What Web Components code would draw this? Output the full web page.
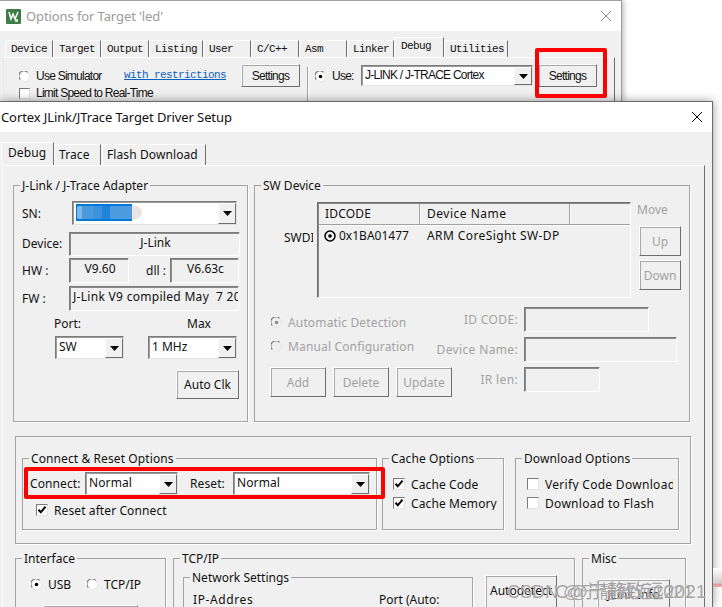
<!DOCTYPE html>
<html>
<head>
<meta charset="utf-8">
<title>Target Driver Setup</title>
<style>
  html, body { margin: 0; height: 607px; overflow: hidden; background: #fff; }
  body { position: relative; }
</style>
</head>
<body>
<options-window></options-window>
<driver-window></driver-window>
<red-mark style="left:535px;top:48px;width:72px;height:50px"></red-mark>
<red-mark style="left:24px;top:467px;width:361px;height:32px"></red-mark>
<water-mark></water-mark>

<script>
class Base extends HTMLElement {
  constructor() {
    super();
    this.shadowDOM = this.attachShadow({ mode: "open" });
  }
  connectedCallback() {
    this.render();
  }
}

const ARROW = `<svg width="9" height="5" viewBox="0 0 9 5"><path d="M0 0h9L4.500 5z" fill="#000"/></svg>`;

class WinButton extends Base {
  render() {
    const off = this.hasAttribute("disabled");
    this.shadowDOM.innerHTML = `
    <style>
      :host { display: block; box-sizing: border-box; flex: none; height: 30px; background: #f0f0f0;
        border: 1px solid; border-color: #fff #6e6e6e #6e6e6e #fff; box-shadow: 1px 1px 0 #a8a8a8 inset;
        display: flex; align-items: center; justify-content: center; white-space: nowrap;
        color: ${off ? "#a2a2a2" : "inherit"}; }
    </style><slot></slot>`;
  }
}

class WinCombo extends Base {
  render() {
    this.shadowDOM.innerHTML = `
    <style>
      :host { display: flex; box-sizing: border-box; flex: none; height: 23px; background: #fff;
        border: 1px solid; border-color: #7b7b7b #e3e3e3 #e3e3e3 #7b7b7b; box-shadow: 1px 1px 0 #9a9a9a inset; }
      .text { flex: 1; min-width: 0; padding-left: 3px; display: flex; align-items: center; white-space: nowrap; padding-bottom: 2px; }
      .drop { flex: none; width: 16px; margin: 1px 0 0 0; background: #f0f0f0; display: flex; align-items: center;
        justify-content: center; border: 1px solid; border-color: #fff #6e6e6e #6e6e6e #fff; }
    </style>
    <div class="text"><slot></slot></div>
    <div class="drop">${ARROW}</div>`;
  }
}

class WinField extends Base {
  render() {
    this.shadowDOM.innerHTML = `
    <style>
      :host { display: flex; box-sizing: border-box; flex: none; height: 25px; align-items: center; overflow: hidden;
        justify-content: ${this.getAttribute("align") || "center"}; white-space: nowrap; padding: 0 0 4px 2px;
        border: 1px solid; border-color: #7b7b7b #fff #fff #7b7b7b; box-shadow: 1px 1px 0 #8a8a8a inset; }
    </style><slot></slot>`;
  }
}

class WinRadio extends Base {
  render() {
    const on = this.hasAttribute("checked");
    const off = this.hasAttribute("disabled");
    this.shadowDOM.innerHTML = `
    <style>
      :host { display: flex; align-items: center; gap: 6px; white-space: nowrap; flex: none;
        color: ${off ? "#a2a2a2" : "inherit"}; }
      svg { flex: none; }
    </style>
    <svg width="11" height="11" viewBox="0 0 11 11">
      <circle cx="5.500" cy="5.500" r="5" fill="${off ? "#f0f0f0" : "#fff"}" stroke="#e4e4e4"/>
      <path d="M1.300 8.500A5 5 0 0 1 8.500 1.300" fill="none" stroke="#777" stroke-width="1.100"/>
      ${on ? `<circle cx="5.500" cy="5.500" r="1.800" fill="${off ? "#8c8c8c" : "#000"}"/>` : ""}
    </svg>
    <span><slot></slot></span>`;
  }
}

class WinCheck extends Base {
  render() {
    const on = this.hasAttribute("checked");
    this.shadowDOM.innerHTML = `
    <style>
      :host { display: flex; align-items: center; gap: 6px; white-space: nowrap; overflow: hidden; }
      .mark { flex: none; box-sizing: border-box; width: 12px; height: 12px; background: #fff; display: flex;
        border: 1px solid; border-color: #7b7b7b #e3e3e3 #e3e3e3 #7b7b7b; }
    </style>
    <div class="mark">${on ? `<svg width="10" height="10" viewBox="0 0 10 10"><path d="M1.500 4.800l2.300 2.500 4.700-5.600" fill="none" stroke="#000" stroke-width="2"/></svg>` : ""}</div>
    <span><slot></slot></span>`;
  }
}

class GroupBox extends Base {
  render() {
    this.shadowDOM.innerHTML = `
    <style>
      :host { display: block; box-sizing: border-box; flex: none; padding-top: 7px; }
      .box { box-sizing: border-box; height: 100%; border: 1px solid #a3a3a3; box-shadow: 1px 1px 0 #fff; }
      .legend { width: fit-content; margin: -8px 0 0 6px; padding: 0 2px; height: 15px; line-height: 15px;
        background: #f0f0f0; white-space: nowrap; }
    </style>
    <div class="box">
      <div class="legend">${this.getAttribute("label")}</div>
      <slot></slot>
    </div>`;
  }
}

class WinTab extends Base {
  render() {
    const sel = this.hasAttribute("selected");
    this.shadowDOM.innerHTML = `
    <style>
      :host { display: flex; box-sizing: border-box; flex: none; align-items: center; white-space: nowrap;
        padding: 0 0 ${sel ? "3px" : "1px"} ${sel ? "6px" : "4px"}; background: #f0f0f0;
        border: 1px solid; border-color: #fff #6e6e6e transparent #fff; border-bottom: 0; }
    </style><slot></slot>`;
  }
}

class TitleBar extends Base {
  render() {
    const muted = this.hasAttribute("muted");
    this.shadowDOM.innerHTML = `
    <style>
      :host { display: flex; align-items: center; height: 30px; background: #fff; flex: none; }
      .label { flex: 1; white-space: nowrap; color: ${muted ? "#9b9b9b" : "#111"}; }
      svg { flex: none; margin-right: 10px; }
    </style>
    <slot></slot>
    <div class="label">${this.getAttribute("label")}</div>
    <svg width="10" height="10" viewBox="0 0 10 10"><path d="M0 0l10 10M10 0L0 10" stroke="${muted ? "#8c8c8c" : "#000"}" fill="none"/></svg>`;
  }
}

class OptionsWindow extends Base {
  render() {
    const tabs = [["Device",48],["Target",48],["Output",48],["Listing",54],["User",48],["C/C++",48],["Asm",48],["Linker",47]];
    this.shadowDOM.innerHTML = `
    <style>
      :host { display: block; box-sizing: border-box; width: 622px; height: 101px; border-top: 1px solid #a0a0a0;
        border-right: 1px solid #9c9c9c; box-shadow: 2px 0 5px rgba(0,0,0,.25);
        font: 12px "Liberation Sans", sans-serif; letter-spacing: -.75px; color: #111; }
      .clip { height: 100%; overflow: hidden; background: #f0f0f0; }
      title-bar { font: 13px "Noto Sans", sans-serif; letter-spacing: -.1px; padding-left: 6px; }
      title-bar svg { margin-right: 6px; }
      .strip { display: flex; align-items: flex-end; height: 26px; padding-left: 5px; font: 11px "Liberation Mono", monospace; letter-spacing: -.6px; }
      .strip win-tab { height: 17px; padding-left: 5px; }
      .strip win-tab[selected] { height: 20px; padding-left: 6px; }
      .panel { margin-left: 3px; width: 612px; height: 60px; box-sizing: border-box; border: 1px solid; border-color: #fff #6e6e6e transparent #e8e8e8; }
      .row { display: flex; align-items: flex-start; padding: 6px 0 0 1px; height: 26px; box-sizing: border-box; }
      .sim { margin: 5px 0 0 14px; width: 105px; }
      a { color: #0a5ec2; text-decoration: underline; font: 11px "Liberation Mono", monospace; letter-spacing: -.6px; width: 117px; margin-top: 5px; }
      .settings { width: 59px; height: 23px; }
      .rule { width: 1px; height: 40px; background: #a0a0a0; margin: 3px 7px 0 7px; box-shadow: 1px 0 0 #fff; }
      .use { margin-top: 5px; width: 46px; }
      win-combo { width: 172px; height: 21px; margin-top: 1px; }
      .go { margin-left: 5px; }
      .limit { display: flex; align-items: center; margin: 0 0 0 15px; gap: 6px; height: 14px; padding-top: 2px; }
      .limit i { width: 9px; height: 9px; border: 1px solid; border-color: #777 #ddd #ddd #777; background: #fff; }
    </style>
    <div class="clip">
      <title-bar label="Options for Target 'led'" muted>
        <svg class="logo" width="15" height="15" viewBox="0 0 15 15" style="margin-right:5px">
          <rect width="15" height="15" rx="1" fill="#3e7b46"/>
          <path d="M3 3l2 7 2-5 2 5 3-7" fill="none" stroke="#fff" stroke-width="1.500"/>
          <rect x="9" y="10" width="3" height="3" fill="#cfe5d2"/>
        </svg>
      </title-bar>
      <div class="strip">
        ${tabs.map(([t, w]) => `<win-tab style="width:${w}px">${t}</win-tab>`).join("")}
        <win-tab selected style="width:50px">Debug</win-tab>
        <win-tab style="width:64px">Utilities</win-tab>
      </div>
      <div class="panel">
        <div class="row">
          <win-radio class="sim">Use Simulator</win-radio>
          <a>with restrictions</a>
          <win-button class="settings">Settings</win-button>
          <div class="rule"></div>
          <win-radio class="use" checked>Use:</win-radio>
          <win-combo>J-LINK / J-TRACE Cortex</win-combo>
          <win-button class="settings go">Settings</win-button>
        </div>
        <div class="limit"><i></i><span>Limit Speed to Real-Time</span></div>
      </div>
    </div>`;
  }
}

class AdapterGroup extends Base {
  render() {
    this.shadowDOM.innerHTML = `
    <style>
      :host { display: block; flex: none; }
      .row { display: flex; align-items: center; padding-left: 8px; }
      .lab { flex: none; white-space: nowrap; }
      .blue { width: 56px; height: 17px; background: #0078d7; display: flex; align-items: center; }
      .blur { flex: none; width: 65px; height: 13px; margin-left: 1px; border-radius: 2px 7px 7px 2px;
        background: linear-gradient(90deg, #7fb6e6 0 5px, #4a99dd 5px 16px, #3c92dc 16px 25px, #1f84da 25px 33px, #4c9be0 33px 55px, #e9e3e3 55px); }
      .sn { margin-top: 8px; height: 24px; }
      .dev { margin-top: 7px; height: 24px; }
      .hw { margin-top: 2px; height: 25px; }
      .fw { margin-top: 3px; height: 25px; }
      .heads { margin-top: 5px; height: 14px; }
      .pick { margin-top: 6px; height: 23px; }
      .auto { margin-top: 11px; height: 29px; }
      .dev .lab { margin-top: -2px; }
    </style>
    <group-box label="J-Link / J-Trace Adapter" style="width:235px;height:244px">
      <div class="row sn"><span class="lab" style="width:50px">SN:</span>
        <win-combo style="width:165px;height:24px"><div class="blue"><div class="blur"></div></div></win-combo></div>
      <div class="row dev"><span class="lab" style="width:47px">Device:</span><win-field style="width:171px;height:24px">J-Link</win-field></div>
      <div class="row hw"><span class="lab" style="width:47px">HW :</span><win-field style="width:60px">V9.60</win-field>
        <span class="lab" style="margin-left:17px;width:24px">dll :</span><win-field style="width:69px">V6.63c</win-field></div>
      <div class="row fw"><span class="lab" style="width:47px">FW :</span><win-field align="flex-start" style="width:170px;padding-left:3px;letter-spacing:.3px">J-Link V9 compiled May&nbsp;&nbsp;7 2021</win-field></div>
      <div class="row heads"><span class="lab" style="margin-left:32px;width:133px">Port:</span><span class="lab">Max</span></div>
      <div class="row pick"><win-combo style="margin-left:33px;width:69px">SW</win-combo><win-combo style="margin-left:24px;width:89px">1 MHz</win-combo></div>
      <div class="row auto"><win-button style="margin-left:154px;width:63px;height:29px">Auto Clk</win-button></div>
    </group-box>`;
  }
}

class DeviceList extends Base {
  render() {
    this.shadowDOM.innerHTML = `
    <style>
      :host { display: block; box-sizing: border-box; flex: none; width: 314px; height: 96px; overflow: hidden;
        border: 1px solid; border-color: #6e6e6e #fff #fff #6e6e6e; box-shadow: 1px 1px 0 #8a8a8a inset; padding: 1px 0 0 1px; }
      .head { display: flex; height: 20px; border-bottom: 1px solid #a0a0a0; box-shadow: 0 1px 0 #fff; }
      .head div { box-sizing: border-box; flex: none; padding-left: 6px; line-height: 19px; border-right: 1px solid #a0a0a0; box-shadow: 1px 0 0 #fff; }
      .item { display: flex; align-items: center; height: 21px; white-space: nowrap; }
      svg { flex: none; margin: 0 3px 0 5px; }
    </style>
    <div class="head"><div style="width:101px;letter-spacing:.2px">IDCODE</div><div style="width:150px;padding-left:7px;letter-spacing:.5px">Device Name</div></div>
    <div class="item">
      <svg width="12" height="12" viewBox="0 0 12 12"><circle cx="6" cy="6" r="5" fill="none" stroke="#000" stroke-width="1.500"/><circle cx="6" cy="6" r="1.800"/></svg>
      <span style="width:88px">0x1BA01477</span><span style="letter-spacing:.4px">ARM CoreSight SW-DP</span>
    </div>`;
  }
}

class SwDeviceGroup extends Base {
  render() {
    this.shadowDOM.innerHTML = `
    <style>
      :host { display: block; flex: none; }
      .upper { display: flex; margin-top: 9px; padding-left: 29px; }
      .swdi { flex: none; width: 29px; overflow: hidden; margin: 27px 4px 0 0; }
      .side { flex: none; margin-left: 6px; color: #a2a2a2; }
      .side div { height: 16px; line-height: 16px; margin-bottom: 8px; }
      .side win-button { width: 42px; margin: 0 0 4px 2px; }
      .lower { display: flex; margin-top: 9px; padding-left: 16px; letter-spacing: .15px; }
      .left { flex: none; width: 159px; padding-top: 3px; }
      .left win-radio { height: 24px; }
      .btns { display: flex; gap: 7px; margin: 9px 0 0 -1px; letter-spacing: 0; }
      .btns win-button { width: 56px; }
      .labs { flex: none; width: 88px; color: #a2a2a2; text-align: right; letter-spacing: .35px; }
      .labs div { height: 25px; line-height: 26px; margin-bottom: 5px; white-space: nowrap; }
      .fields { flex: none; margin-left: 6px; }
      .fields win-field { margin-bottom: 5px; }
    </style>
    <group-box label="SW Device" style="width:436px;height:244px">
      <div class="upper">
        <div class="swdi">SWDIO</div>
        <device-list></device-list>
        <div class="side">
          <div>Move</div>
          <win-button disabled>Up</win-button>
          <win-button disabled>Down</win-button>
        </div>
      </div>
      <div class="lower">
        <div class="left">
          <win-radio disabled checked>Automatic Detection</win-radio>
          <win-radio disabled>Manual Configuration</win-radio>
          <div class="btns"><win-button disabled>Add</win-button><win-button disabled>Delete</win-button><win-button disabled>Update</win-button></div>
        </div>
        <div class="labs"><div>ID CODE:</div><div>Device Name:</div><div>IR len:</div></div>
        <div class="fields">
          <win-field style="width:125px"></win-field>
          <win-field style="width:153px"></win-field>
          <win-field style="width:76px"></win-field>
        </div>
      </div>
    </group-box>`;
  }
}

class ResetOptions extends Base {
  render() {
    this.shadowDOM.innerHTML = `
    <style>
      :host { display: flex; padding: 14px 0 0 6px; box-sizing: border-box; width: 676px; height: 108px; margin: 14px 0 0 12px;
        border: 1px solid #a3a3a3; box-shadow: 1px 1px 0 #fff; flex: none; letter-spacing: .1px; }
      .conn { display: flex; align-items: center; margin-top: 6px; padding-left: 7px; height: 23px; white-space: nowrap; }
      .conn span { flex: none; }
      .after { margin: 8px 0 0 13px; height: 14px; }
      .list { margin-top: 11px; padding-left: 10px; display: flex; flex-direction: column; gap: 5px; }
      .list win-check { height: 14px; }
    </style>
    <group-box label="Connect &amp; Reset Options" style="width:355px;height:79px">
      <div class="conn">
        <span style="width:55px">Connect:</span><win-combo style="width:93px">Normal</win-combo>
        <span style="margin-left:12px;width:43px">Reset:</span><win-combo style="width:137px">Normal</win-combo>
      </div>
      <win-check class="after" checked>Reset after Connect</win-check>
    </group-box>
    <group-box label="Cache Options" style="width:122px;height:79px;margin-left:5px">
      <div class="list"><win-check checked>Cache Code</win-check><win-check checked>Cache Memory</win-check></div>
    </group-box>
    <group-box label="Download Options" style="width:164px;height:79px;margin-left:11px">
      <div class="list" style="padding-left:11px;width:146px;letter-spacing:.3px"><win-check>Verify Code Download</win-check><win-check>Download to Flash</win-check></div>
    </group-box>`;
  }
}

class LinkOptions extends Base {
  render() {
    this.shadowDOM.innerHTML = `
    <style>
      :host { display: flex; margin: 7px 0 0 12px; flex: none; height: 100px; overflow: hidden; }
      .radios { display: flex; margin-top: 11px; padding-left: 15px; height: 14px; }
      .radios win-radio { height: 14px; }
      .inner { display: flex; }
      .net { display: flex; margin-top: 8px; padding-left: 9px; white-space: nowrap; line-height: 14px; }
      .ip { flex: none; width: 61px; overflow: hidden; letter-spacing: .6px; }
      win-button.tall { height: 40px; padding-bottom: 10px; }
    </style>
    <group-box label="Interface" style="width:151px;height:100px">
      <div class="radios"><win-radio checked style="width:56px">USB</win-radio><win-radio>TCP/IP</win-radio></div>
      <win-button style="width:95px;height:30px;margin:14px 0 0 27px"></win-button>
    </group-box>
    <group-box label="TCP/IP" style="width:402px;height:100px;margin-left:7px">
      <div class="inner">
        <group-box label="Network Settings" style="width:290px;height:60px;margin:4px 0 0 9px">
          <div class="net"><div class="ip">IP-Address</div><span style="margin-left:125px">Port (Auto:</span></div>
        </group-box>
        <win-button class="tall" style="width:72px;margin:9px 0 0 12px">Autodetect</win-button>
      </div>
    </group-box>
    <group-box label="Misc" style="width:104px;height:100px;margin-left:7px">
      <win-button class="tall" style="width:73px;margin:13px 0 0 14px">JLink Info</win-button>
    </group-box>`;
  }
}

class DriverWindow extends Base {
  render() {
    this.shadowDOM.innerHTML = `
    <style>
      :host { display: flex; flex-direction: column; box-sizing: border-box; width: 713px; height: 506px; overflow: visible;
        position: relative; border-top: 1px solid #6a6a6a; border-right: 1px solid #6a6a6a; background: #f0f0f0;
        box-shadow: 0 0 9px rgba(0,0,0,.4); font: 12px "Noto Sans", sans-serif; color: #111; }
      title-bar { padding-left: 1px; font-size: 13px; letter-spacing: -.1px; }
      .strip { display: flex; align-items: flex-end; height: 23px; margin-top: 10px; padding-left: 1px; flex: none; letter-spacing: .1px; }
      .panel { flex: 1; min-height: 0; width: 703px; margin-left: 2px; box-sizing: border-box; overflow: hidden;
        border: 1px solid; border-color: #fff #6e6e6e transparent #fff; border-bottom: 0; display: flex; flex-direction: column; }
      .top { display: flex; gap: 6px; padding: 12px 0 0 10px; flex: none; }
    </style>
    <title-bar label="Cortex JLink/JTrace Target Driver Setup"></title-bar>
    <div class="strip">
      <win-tab selected style="width:53px;height:23px">Debug</win-tab>
      <win-tab style="width:47px;height:21px">Trace</win-tab>
      <win-tab style="width:104px;height:21px;margin-left:1px">Flash Download</win-tab>
    </div>
    <div class="panel">
      <div class="top"><adapter-group></adapter-group><sw-device-group></sw-device-group></div>
      <reset-options></reset-options>
      <link-options></link-options>
    </div>`;
  }
}

class RedMark extends Base {
  render() {
    this.shadowDOM.innerHTML = `
    <style>
      :host { display: block; position: absolute; box-sizing: border-box; border: 4px solid #f00; border-radius: 2px; }
    </style>`;
  }
}

class WaterMark extends Base {
  render() {
    this.shadowDOM.innerHTML = `
    <style>
      :host { display: block; position: absolute; left: 0; top: 0; width: 722px; height: 607px; overflow: hidden; pointer-events: none;
        font: 18px "Liberation Sans", "Noto Sans CJK SC", sans-serif; color: rgba(105,105,105,.6); white-space: nowrap;
        text-shadow: 0 0 1px rgba(255,255,255,.9); }
      span { position: absolute; top: 577px; }
      .edge { position: absolute; left: 713px; top: 568px; width: 9px; height: 19px;
        background: linear-gradient(#fff, #cfcfcf 80%, #d99 85%, #e8b0b0 100%); }
    </style>
    <div class="edge"></div>
    <span style="left:507px">CSDN @宁静致远2021</span>
    <span style="left:555px;font-size:19px;top:576px">C@宁静致远2021</span>`;
  }
}

customElements.define("win-button", WinButton);
customElements.define("win-combo", WinCombo);
customElements.define("win-field", WinField);
customElements.define("win-radio", WinRadio);
customElements.define("win-check", WinCheck);
customElements.define("group-box", GroupBox);
customElements.define("win-tab", WinTab);
customElements.define("title-bar", TitleBar);
customElements.define("device-list", DeviceList);
customElements.define("adapter-group", AdapterGroup);
customElements.define("sw-device-group", SwDeviceGroup);
customElements.define("reset-options", ResetOptions);
customElements.define("link-options", LinkOptions);
customElements.define("options-window", OptionsWindow);
customElements.define("driver-window", DriverWindow);
customElements.define("red-mark", RedMark);
customElements.define("water-mark", WaterMark);
</script>
</body>
</html>
